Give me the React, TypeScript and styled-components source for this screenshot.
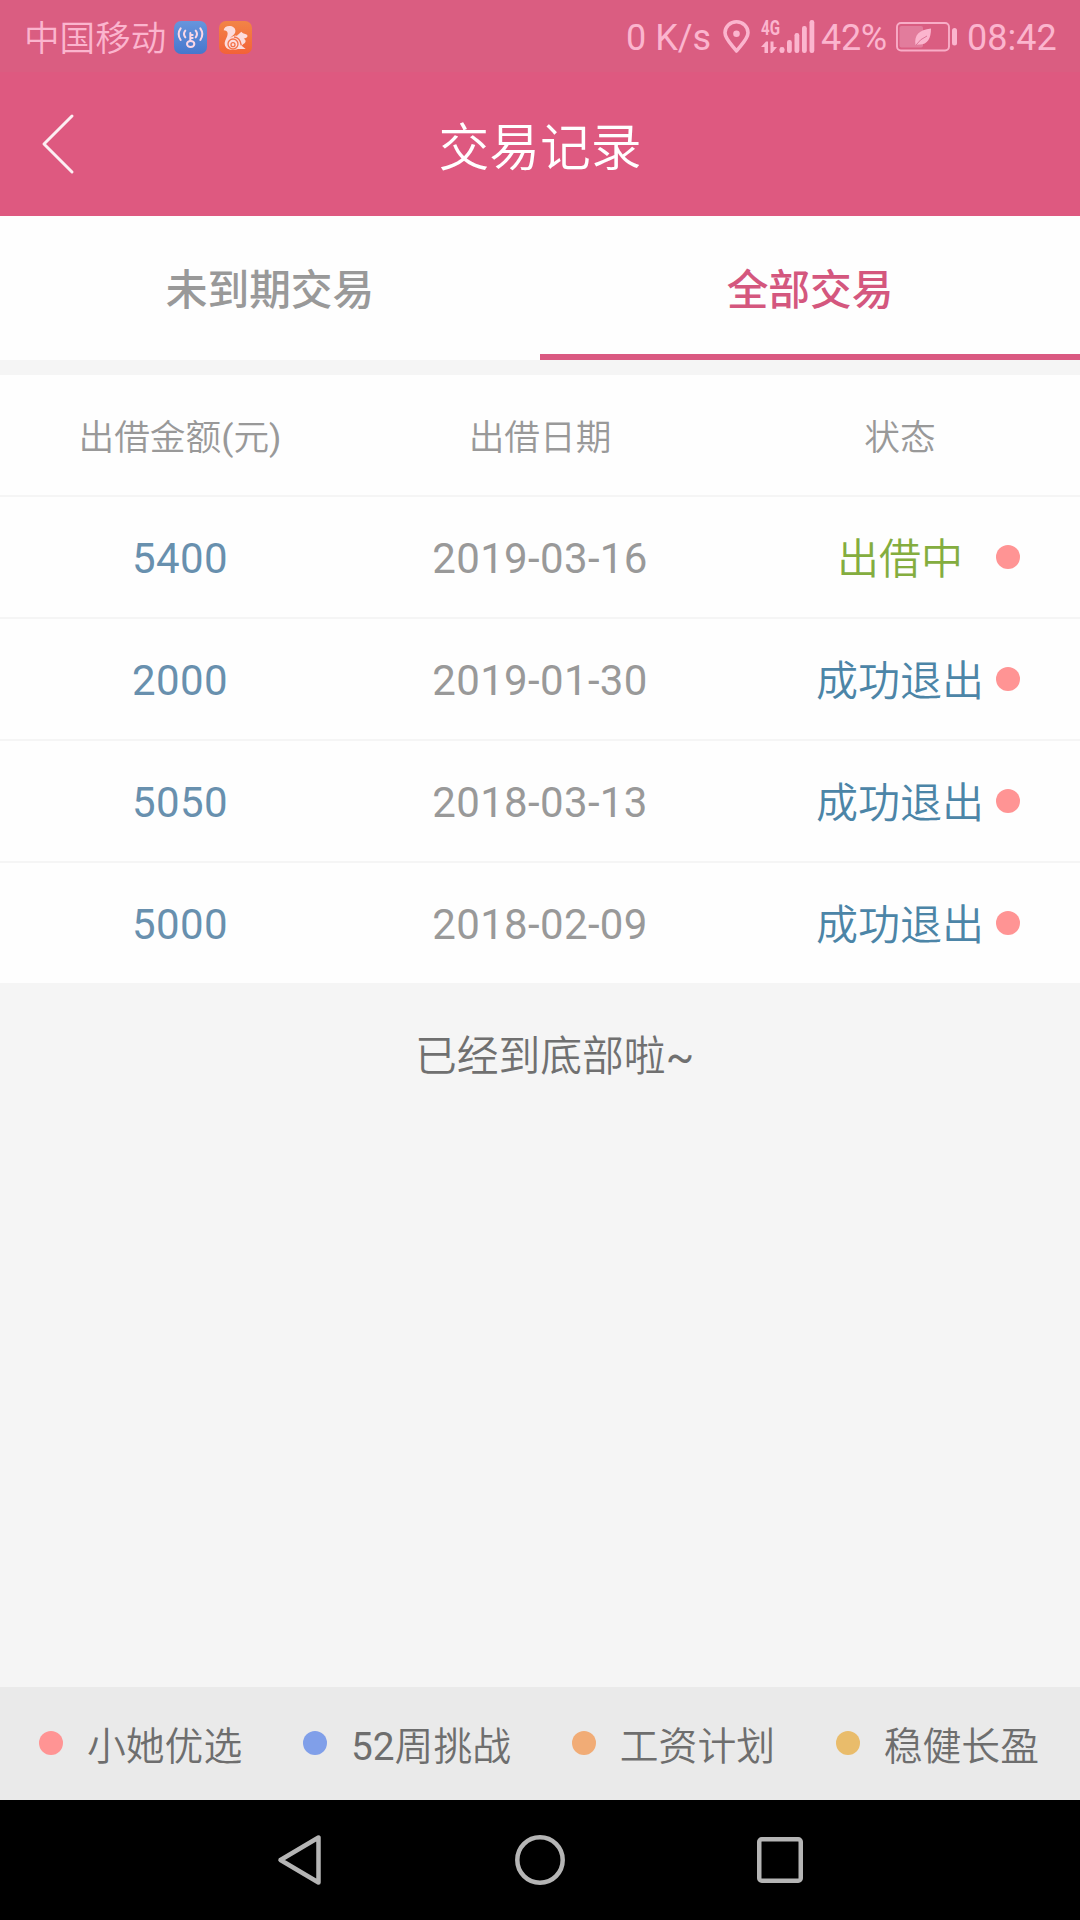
import React from 'react';
import styled, { createGlobalStyle } from 'styled-components';

const GlobalStyle = createGlobalStyle`
  * { box-sizing: border-box; }
  body { margin: 0; background: #f5f5f5; font-family: Roboto, "Noto Sans CJK SC", sans-serif; }
`;

const Screen = styled.div`
  width: 1080px;
  height: 1920px;
  display: flex;
  flex-direction: column;
  background: #f5f5f5;
  overflow: hidden;
`;

const StatusBar = styled.div`
  height: 72px;
  flex: none;
  display: flex;
  align-items: center;
  justify-content: space-between;
  padding: 2px 23px 0 24px;
  background: #da5d81;
  color: #fbb5ce;
  font-size: 36px;
  line-height: 44px;
`;

const StatusGroup = styled.div`
  display: flex;
  align-items: center;
  white-space: nowrap;
`;

const Carrier = styled.span`
  font-weight: 350;
  font-size: 35.6px;
  width: 150px;
  padding-top: 4px;
`;

const StatusText = styled.span<{ $width: number; $spacing?: number }>`
  width: ${p => p.$width}px;
  padding-top: 2px;
  letter-spacing: ${p => p.$spacing ?? 0}px;
`;

const StatusIcon = styled.svg<{ $gap?: number }>`
  display: block;
  flex: none;
  margin-right: ${p => p.$gap ?? 0}px;
`;

const Header = styled.header`
  height: 144px;
  flex: none;
  display: grid;
  grid-template-columns: 120px 1fr 120px;
  align-items: center;
  background: #de5980;
`;

const BackButton = styled.button`
  height: 144px;
  padding: 0 0 0 40px;
  border: 0;
  background: none;
  display: flex;
  align-items: center;
`;

const Title = styled.h1`
  margin: 0;
  padding-top: 9px;
  color: #fff;
  font-size: 50.8px;
  line-height: 60px;
  font-weight: 350;
  text-align: center;
`;

const Tabs = styled.nav`
  height: 144px;
  flex: none;
  display: grid;
  grid-template-columns: 1fr 1fr;
  margin-bottom: 15px;
  background: #fefefe;
`;

const Tab = styled.button<{ $active?: boolean }>`
  border: 0;
  border-bottom: 6px solid ${p => (p.$active ? '#da5981' : 'transparent')};
  padding: 12px 0 0;
  background: none;
  color: ${p => (p.$active ? '#d4577e' : '#999')};
  font: 500 41.700px/50px Roboto, "Noto Sans CJK SC", sans-serif;
`;

const Table = styled.section`
  flex: none;
  background: #fefefe;
`;

const Row = styled.div`
  height: 122px;
  display: grid;
  grid-template-columns: repeat(3, 360px);
  align-items: center;
  border-bottom: 2px solid #f5f5f5;
  text-align: center;
  &:last-child { height: 120px; border-bottom: 0; }
`;

const HeadCell = styled.span`
  color: #999;
  font-size: 35.700px;
  font-weight: 350;
  line-height: 44px;
  padding-top: 6px;
`;

const Cell = styled.span<{ $color: string }>`
  padding-top: 3px;
  color: ${p => p.$color};
  font-size: 42px;
  line-height: 50px;
  letter-spacing: 0.35px;
`;

const StatusCell = styled(Cell)`
  position: relative;
  padding-top: 6px;
  font-weight: 350;
  letter-spacing: 0;
`;

const Dot = styled.i<{ $color: string }>`
  display: block;
  flex: none;
  width: 24px;
  height: 24px;
  border-radius: 50%;
  background: ${p => p.$color};
`;

const RowMarker = styled(Dot)`
  position: absolute;
  right: 60px;
  top: 16px;
`;

const EndNote = styled.p`
  margin: 0;
  padding: 49px 0 0 29px;
  flex: 1;
  color: #707070;
  font-size: 41.800px;
  font-weight: 350;
  line-height: 50px;
  text-align: center;
`;

const Latin = styled.span`
  font-weight: 400;
`;

const Legend = styled.footer`
  height: 113px;
  flex: none;
  display: flex;
  align-items: center;
  justify-content: space-between;
  padding: 0 41px 2px 39px;
  background: #eaeaea;
  color: #6e6e6e;
  font-size: 38.800px;
  font-weight: 350;
  line-height: 48px;
`;

const LegendItem = styled.div`
  display: flex;
  align-items: center;
  gap: 24px;
  white-space: nowrap;
`;

const LegendLabel = styled.span`
  padding-top: 8px;
`;

const NavBar = styled.div`
  height: 120px;
  flex: none;
  display: grid;
  grid-template-columns: repeat(3, 240px);
  justify-content: center;
  align-items: center;
  justify-items: center;
  background: #000;
`;

const records = [
  { amount: '5400', date: '2019-03-16', status: '出借中', open: true },
  { amount: '2000', date: '2019-01-30', status: '成功退出', open: false },
  { amount: '5050', date: '2018-03-13', status: '成功退出', open: false },
  { amount: '5000', date: '2018-02-09', status: '成功退出', open: false },
];

const plans = [
  { count: '', label: '小她优选', color: '#ff9494' },
  { count: '52', label: '周挑战', color: '#809fe9' },
  { count: '', label: '工资计划', color: '#f1ac76' },
  { count: '', label: '稳健长盈', color: '#e9bc6b' },
];

const WifiKeyIcon = () => (
  <StatusIcon width="33" height="33" viewBox="0 0 99 99" $gap={12}>
    <defs>
      <linearGradient id="wifi" x1="0" y1="0" x2="0" y2="1">
        <stop offset="0" stopColor="#6795dc" />
        <stop offset="1" stopColor="#4677cd" />
      </linearGradient>
    </defs>
    <rect width="99" height="99" rx="21" fill="url(#wifi)" />
    <g fill="none" stroke="#fbd7e6" strokeWidth="6" strokeLinecap="round">
      <path d="M20 22Q8 39 20 57M34 29Q26 39 34 49M79 22Q91 39 79 57M65 29Q73 39 65 49" />
      <ellipse cx="50" cy="69" rx="11" ry="9" />
      <path d="M49 60V36M49 42H56M49 51H56" />
    </g>
  </StatusIcon>
);

const SquirrelIcon = () => (
  <StatusIcon width="33" height="33" viewBox="0 0 99 99">
    <defs>
      <linearGradient id="squirrel" x1="0" y1="0" x2="0" y2="1">
        <stop offset="0" stopColor="#f28446" />
        <stop offset="1" stopColor="#f36238" />
      </linearGradient>
    </defs>
    <rect width="99" height="99" rx="21" fill="url(#squirrel)" />
    <path d="M14 28C15 18 24 14 34 15C47 17 52 27 48 36C45 43 36 46 33 52C45 42 53 41 61 48C53 44 53 42 57 41L67 32C70 37 77 38 84 41C87 45 85 49 80 51L74 53C82 56 82 64 73 69L68 74L80 84H48L64 78C60 84 52 87 43 86C28 88 16 79 17 65C18 55 26 48 26 38C26 31 20 28 14 28Z" fill="#fcdcdc" />
    <circle cx="42" cy="69" r="15" fill="none" stroke="#f4734a" strokeWidth="4" />
    <circle cx="42" cy="71" r="6" fill="none" stroke="#f4734a" strokeWidth="4" />
    <path d="M45 48Q63 49 67 73" fill="none" stroke="#f4734a" strokeWidth="4" />
  </StatusIcon>
);

const PinIcon = () => (
  <StatusIcon width="27" height="34" viewBox="0 0 27 34" $gap={11}>
    <path d="M13.5 31C9 25 2 19 2 12.8A11.5 11 0 0 1 25 12.8C25 19 18 25 13.5 31Z" fill="none" stroke="currentColor" strokeWidth="3.6" strokeLinejoin="round" />
    <circle cx="13.5" cy="13.7" r="3.3" fill="currentColor" />
  </StatusIcon>
);

const SignalText = styled.text`
  font: 700 20px/20px Roboto, sans-serif;
`;

const SignalSvg = styled(StatusIcon)`
  overflow: visible;
  margin-top: -6px;
`;

const SignalIcon = () => (
  <SignalSvg width="54" height="40" viewBox="0 -6 54 40" fill="currentColor" $gap={6}>
    <SignalText x="0" y="15" textLength="19" lengthAdjust="spacingAndGlyphs">4G</SignalText>
    <path d="M0 27L5 21.500H7V33H3.500V27ZM9.500 21.500H12.500V27H16L11 33H9.500Z" />
    <rect x="18.500" y="27" width="5" height="6" rx="2.300" />
    <rect x="26" y="20" width="4.800" height="13" rx="2.200" />
    <rect x="33.500" y="13" width="4.800" height="20" rx="2.200" />
    <rect x="41" y="6" width="4.800" height="27" rx="2.200" />
    <rect x="48.500" y="0" width="4.800" height="33" rx="2.200" />
  </SignalSvg>
);

const BatteryIcon = () => (
  <StatusIcon width="61" height="30" viewBox="0 0 61 30" $gap={10}>
    <rect x="1" y="1" width="52" height="27.500" rx="4" fill="none" stroke="#f8adc7" strokeWidth="1.900" />
    <rect x="3.500" y="4" width="23.500" height="21.500" rx="2" fill="#e27c9c" />
    <path d="M19.500 23C18 13 23 8 35 6.500C35 17 31 23.500 22 22.500Z" fill="currentColor" />
    <path d="M20 23Q24 17 31 14" stroke="#dc7698" fill="none" strokeWidth="1" />
    <rect x="56" y="6" width="5" height="17.500" rx="2.500" fill="currentColor" />
  </StatusIcon>
);

export default function App() {
  return (
    <Screen>
      <GlobalStyle />
      <StatusBar>
        <StatusGroup>
          <Carrier>中国移动</Carrier>
          <WifiKeyIcon />
          <SquirrelIcon />
        </StatusGroup>
        <StatusGroup>
          <StatusText $width={97}>0 K/s</StatusText>
          <PinIcon />
          <SignalIcon />
          <StatusText $width={75} $spacing={-0.3}>42%</StatusText>
          <BatteryIcon />
          <StatusText $width={90}>08:42</StatusText>
        </StatusGroup>
      </StatusBar>
      <Header>
        <BackButton aria-label="返回">
          <svg width="36" height="62" viewBox="0 0 36 62" fill="none" stroke="#fff" strokeOpacity="0.9" strokeWidth="3" strokeLinecap="round" strokeLinejoin="round">
            <path d="M32 3L4 31L32 59" />
          </svg>
        </BackButton>
        <Title>交易记录</Title>
      </Header>
      <Tabs>
        <Tab>未到期交易</Tab>
        <Tab $active>全部交易</Tab>
      </Tabs>
      <Table>
        <Row>
          <HeadCell>出借金额<Latin>(</Latin>元<Latin>)</Latin></HeadCell>
          <HeadCell>出借日期</HeadCell>
          <HeadCell>状态</HeadCell>
        </Row>
        {records.map(r => (
          <Row key={r.date}>
            <Cell $color="#6890ae">{r.amount}</Cell>
            <Cell $color="#999">{r.date}</Cell>
            <StatusCell $color={r.open ? '#84ad3f' : '#4c85a7'}>
              {r.status}
              <RowMarker $color="#ff9494" />
            </StatusCell>
          </Row>
        ))}
      </Table>
      <EndNote>已经到底部啦<Latin>~</Latin></EndNote>
      <Legend>
        {plans.map(p => (
          <LegendItem key={p.label}>
            <Dot $color={p.color} />
            <LegendLabel><Latin>{p.count}</Latin>{p.label}</LegendLabel>
          </LegendItem>
        ))}
      </Legend>
      <NavBar>
        <svg width="50" height="54" viewBox="0 0 50 54" fill="none" stroke="#b5b5b5" strokeWidth="4.500" strokeLinejoin="round">
          <path d="M5.500 27L43.500 4.500V49.500Z" />
        </svg>
        <svg width="50" height="50" viewBox="0 0 50 50" fill="none" stroke="#b5b5b5" strokeWidth="4.500">
          <circle cx="25" cy="25" r="22.700" />
        </svg>
        <svg width="46" height="46" viewBox="0 0 46 46" fill="none" stroke="#b5b5b5" strokeWidth="4.500">
          <rect x="2.250" y="2.250" width="41.500" height="41.500" rx="2.500" />
        </svg>
      </NavBar>
    </Screen>
  );
}
